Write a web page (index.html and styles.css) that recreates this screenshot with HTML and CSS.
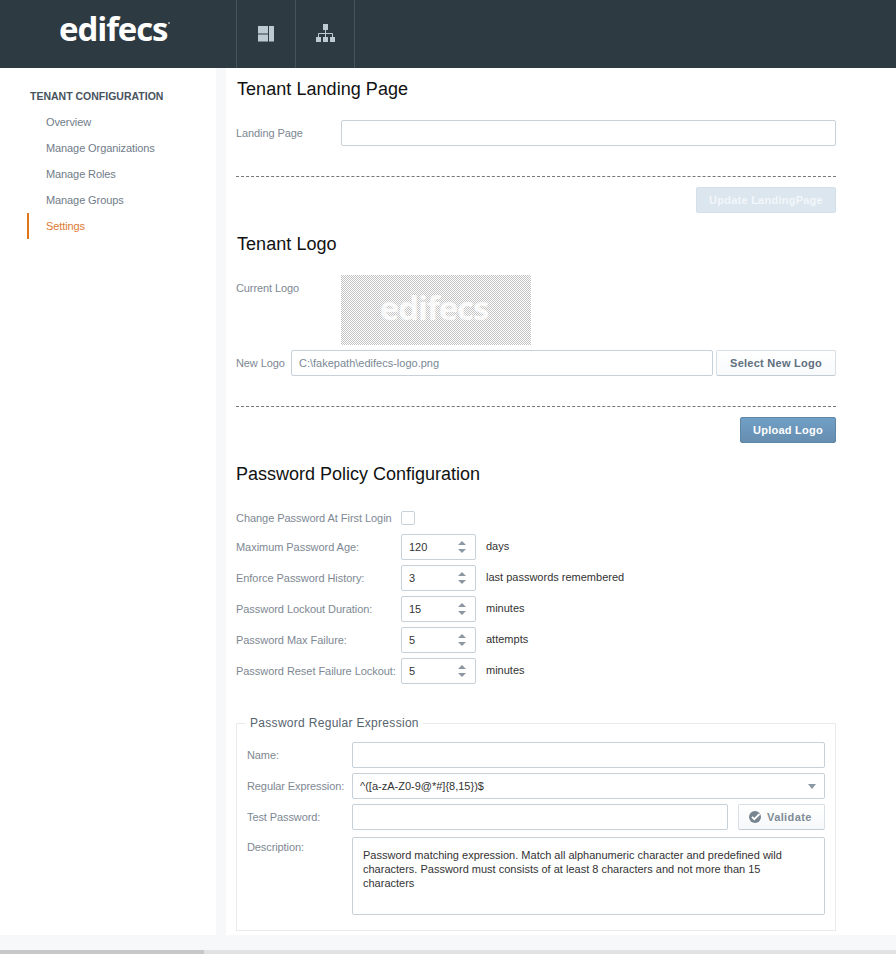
FILE: index.html
```html
<!DOCTYPE html>
<html lang="en">

<head>
 <meta charset="UTF-8">
 <meta name="viewport" content="width=device-width">
 <title>Settings</title>
 <link rel="stylesheet" href="styles.css">
</head>

<body>

 <header class="topbar">
  <div class="brand"><span class="brand-name">edifecs</span><span class="brand-mark"></span></div>
  <a class="topnav" href="#">
   <svg width="16" height="16" viewBox="0 0 16 16">
    <rect x="0" y="0" width="10" height="7.5" fill="#bccad2"/>
    <rect x="0" y="8.5" width="10" height="7" fill="#bccad2"/>
    <rect x="11" y="0" width="5" height="15.5" fill="#bccad2"/>
   </svg>
  </a>
  <a class="topnav last" href="#">
   <svg width="19" height="18" viewBox="0 0 19 18">
    <rect x="7" y="0" width="5" height="6" fill="#bccad2"/>
    <path d="M9.5 6v7M2.5 13V9.5h14V13" fill="none" stroke="#bccad2"/>
    <rect x="0" y="13" width="5" height="5" fill="#bccad2"/>
    <rect x="7" y="13" width="5" height="5" fill="#bccad2"/>
    <rect x="14" y="13" width="5" height="5" fill="#bccad2"/>
   </svg>
  </a>
 </header>

 <div class="layout">

  <nav class="sidebar">
   <h3>Tenant Configuration</h3>
   <a href="#">Overview</a>
   <a href="#">Manage Organizations</a>
   <a href="#">Manage Roles</a>
   <a href="#">Manage Groups</a>
   <a class="active" href="#">Settings</a>
  </nav>

  <main class="content">

   <h2 class="inset">Tenant Landing Page</h2>
   <div class="row landing">
    <label class="lbl-landing">Landing Page</label>
    <input class="field grow">
   </div>
   <hr class="dash">
   <div class="actions"><button class="btn primary disabled" type="button">Update LandingPage</button></div>

   <h2 class="logo-title inset">Tenant Logo</h2>
   <div class="row current-logo">
    <label class="lbl-landing">Current Logo</label>
    <div class="logo-preview"><span>edifecs</span></div>
   </div>
   <div class="row new-logo">
    <label>New Logo</label>
    <input class="field grow path" value="C:\fakepath\edifecs-logo.png">
    <button class="btn select-logo" type="button">Select New Logo</button>
   </div>
   <hr class="dash">
   <div class="actions"><button class="btn primary upload" type="button">Upload Logo</button></div>

   <h2 class="logo-title">Password Policy Configuration</h2>

   <div class="policy">
    <div class="row check-row">
     <label class="lbl-policy">Change Password At First Login</label>
     <input class="check" type="checkbox">
    </div>
    <div class="row">
     <label class="lbl-policy">Maximum Password Age:</label>
     <div class="spinner"><input value="120"><span class="arrows"><i class="up"></i><i class="down"></i></span></div>
     <span class="unit">days</span>
    </div>
    <div class="row">
     <label class="lbl-policy">Enforce Password History:</label>
     <div class="spinner"><input value="3"><span class="arrows"><i class="up"></i><i class="down"></i></span></div>
     <span class="unit">last passwords remembered</span>
    </div>
    <div class="row">
     <label class="lbl-policy">Password Lockout Duration:</label>
     <div class="spinner"><input value="15"><span class="arrows"><i class="up"></i><i class="down"></i></span></div>
     <span class="unit">minutes</span>
    </div>
    <div class="row">
     <label class="lbl-policy">Password Max Failure:</label>
     <div class="spinner"><input value="5"><span class="arrows"><i class="up"></i><i class="down"></i></span></div>
     <span class="unit">attempts</span>
    </div>
    <div class="row">
     <label class="lbl-policy">Password Reset Failure Lockout:</label>
     <div class="spinner"><input value="5"><span class="arrows"><i class="up"></i><i class="down"></i></span></div>
     <span class="unit">minutes</span>
    </div>
   </div>

   <fieldset class="regex">
    <legend>Password Regular Expression</legend>
    <div class="row">
     <label class="lbl-regex">Name:</label>
     <input class="field grow">
    </div>
    <div class="row">
     <label class="lbl-regex">Regular Expression:</label>
     <div class="field grow select">^([a-zA-Z0-9@*#]{8,15})$<i class="caret"></i></div>
    </div>
    <div class="row">
     <label class="lbl-regex">Test Password:</label>
     <input class="field grow">
     <button class="btn validate" type="button">
      <svg width="12" height="12" viewBox="0 0 12 12">
       <circle cx="6" cy="6" r="6" fill="#76858f"/>
       <path d="M3 5.8l2.3 2.4L10.6 3" fill="none" stroke="#fff" stroke-width="1.8"/>
      </svg>
      Validate
     </button>
    </div>
    <div class="row desc-row">
     <label class="lbl-regex">Description:</label>
     <textarea class="field grow desc">Password matching expression. Match all alphanumeric character and predefined wild characters. Password must consists of at least 8 characters and not more than 15 characters</textarea>
    </div>
   </fieldset>

  </main>
 </div>

 <div class="hscroll"><div class="thumb"></div></div>

</body>
</html>
```

FILE: styles.css
```css
html, body {
  margin: 0;
  height: 954px;
  overflow: hidden;
}
body {
  font-family: "Liberation Sans", Arial, sans-serif;
  font-size: 11px;
  background-color: #f7f8fa;
  color: #333;
  position: relative;
}

/* barra superior */
.topbar {
  display: flex;
  height: 68px;
  background-color: #2e3a42;
}
.brand {
  width: 236px;
  box-sizing: border-box;
  padding: 8px 0 0 59px;
  display: flex;
  align-items: flex-start;
}
.brand-name {
  font-family: "Open Sans", sans-serif;
  font-size: 33px;
  line-height: 42px;
  font-weight: 700;
  letter-spacing: -1.1px;
  color: #fff;
}
.brand-mark {
  width: 2px;
  height: 2px;
  margin: 14px 0 0 1px;
  background-color: #8f999f;
}
.topnav {
  width: 59px;
  box-sizing: border-box;
  border-left: 1px solid #46535b;
  display: flex;
  justify-content: center;
  padding-top: 26px;
}
.topnav.last {
  width: 60px;
  border-right: 1px solid #46535b;
  padding-top: 24px;
}

.layout {
  display: flex;
  height: 867px;
}

/* menu lateral */
.sidebar {
  width: 216px;
  box-sizing: border-box;
  background-color: white;
  padding: 21px 0 0 27px;
}
.sidebar h3 {
  margin: 0 0 6px 3px;
  font-size: 10.5px;
  line-height: 14px;
  font-weight: bold;
  text-transform: uppercase;
  color: #47535d;
}
.sidebar a {
  display: block;
  height: 26px;
  line-height: 26px;
  padding-left: 19px;
  color: #707c89;
  text-decoration: none;
  letter-spacing: -0.1px;
}
.sidebar a.active {
  padding-left: 17px;
  border-left: 2px solid #e0761a;
  color: #dc7a33;
}

/* contenido */
.content {
  flex: 1;
  margin-left: 10px;
  background-color: white;
  padding: 9px 60px 0 10px;
}
h2 {
  margin: 0;
  font-size: 18px;
  line-height: 24px;
  font-weight: normal;
  color: #111;
}
.inset {
  padding-left: 1px;
  letter-spacing: 0.05px;
}
.logo-title {
  margin-top: 19px;
}
.row {
  display: flex;
  align-items: center;
}
label {
  color: #7e8893;
  letter-spacing: -0.1px;
}
.landing {
  margin-top: 19px;
}
.lbl-landing {
  width: 105px;
  flex: none;
}
.field {
  height: 26px;
  box-sizing: border-box;
  border: 1px solid #c6d1da;
  border-radius: 2px;
  background-color: white;
  font-family: inherit;
  font-size: 11px;
  color: #333;
  padding: 0 7px;
  outline: none;
}
.grow {
  flex: 1;
  min-width: 0;
}
.dash {
  margin: 30px 0 10px;
  height: 0;
  border: 0;
  border-top: 1px dashed #777;
}
.actions {
  display: flex;
  justify-content: flex-end;
}
.btn {
  height: 26px;
  box-sizing: border-box;
  border-radius: 2px;
  font-family: inherit;
  font-size: 11px;
  font-weight: bold;
  letter-spacing: 0.25px;
  padding: 0;
  cursor: pointer;
}
.primary {
  color: white;
  background: linear-gradient(#719fc5, #668eb0);
  border: 1px solid #5e86a7;
}
.primary.disabled {
  width: 140px;
  color: #f3f7fa;
  background: #dbe6ef;
  border: 1px solid #d5e1ea;
}
.upload {
  width: 96px;
}
.current-logo {
  margin-top: 19px;
  align-items: flex-start;
}
.current-logo label {
  margin-top: 7px;
}
.logo-preview {
  width: 190px;
  height: 70px;
  box-sizing: border-box;
  padding: 0 4px 6px 0;
  background-color: white;
  background-image: url("data:image/svg+xml,%3Csvg xmlns='http://www.w3.org/2000/svg' width='2' height='2' shape-rendering='crispEdges'%3E%3Crect width='1' height='1' fill='%23c4c4c4'/%3E%3Crect x='1' y='1' width='1' height='1' fill='%23c4c4c4'/%3E%3C/svg%3E");
  background-size: 2px 2px;
  display: flex;
  align-items: center;
  justify-content: center;
}
.logo-preview span {
  font-family: "Open Sans", sans-serif;
  font-size: 33px;
  font-weight: 700;
  letter-spacing: -1.1px;
  color: #fff;
  opacity: 0.85;
}
.new-logo {
  margin-top: 5px;
}
.new-logo label {
  width: 55px;
  flex: none;
}
.path {
  color: #7a8896;
}
.select-logo {
  width: 120px;
  margin-left: 3px;
  color: #5f6f7f;
  background: linear-gradient(#fff, #f7f9fb);
  border: 1px solid #d8dfe5;
  border-bottom-color: #c2ccd4;
}

/* politica de contrasenas */
.policy {
  margin-top: 25px;
}
.policy .row {
  height: 26px;
  margin-bottom: 5px;
}
.policy .check-row {
  height: 14px;
  margin: 5px 0 9px;
}
.lbl-policy {
  width: 165px;
  flex: none;
  white-space: nowrap;
  letter-spacing: -0.05px;
}
.check {
  appearance: none;
  width: 14px;
  height: 14px;
  margin: 0;
  box-sizing: border-box;
  border: 1px solid #c6d1da;
  border-radius: 2px;
  background-color: white;
}
.spinner {
  width: 75px;
  height: 26px;
  box-sizing: border-box;
  border: 1px solid #c6d1da;
  border-radius: 2px;
  display: flex;
  align-items: center;
}
.spinner input {
  width: 43px;
  border: 0;
  padding: 0 0 0 7px;
  font-family: inherit;
  font-size: 11px;
  color: #333;
  outline: none;
}
.arrows {
  display: flex;
  flex-direction: column;
  gap: 4px;
  margin-left: 6px;
}
.arrows i {
  display: block;
  width: 0;
  height: 0;
  border-left: 4px solid transparent;
  border-right: 4px solid transparent;
}
.arrows .up {
  border-bottom: 4px solid #8b98a3;
}
.arrows .down {
  border-top: 4px solid #8b98a3;
}
.unit {
  margin: -2px 0 0 10px;
  color: #333;
}

/* expresion regular */
.regex {
  margin: 32px 0 0;
  padding: 12px 10px 15px;
  height: 215px;
  box-sizing: border-box;
  border: 1px solid #e8eaec;
}
.regex legend {
  padding: 0 4px;
  margin-left: -1px;
  font-size: 12px;
  line-height: 14px;
  letter-spacing: 0.3px;
  color: #56636e;
}
.regex .row {
  margin-bottom: 5px;
}
.lbl-regex {
  width: 105px;
  flex: none;
}
.select {
  position: relative;
  display: flex;
  align-items: center;
}
.caret {
  position: absolute;
  right: 8px;
  top: 10px;
  width: 0;
  height: 0;
  border-left: 4px solid transparent;
  border-right: 4px solid transparent;
  border-top: 5px solid #8b98a3;
}
.validate {
  width: 87px;
  margin-left: 10px;
  color: #7f8c96;
  background: linear-gradient(#fff, #f6f8fa);
  border: 1px solid #d8dfe5;
  border-bottom-color: #c2ccd4;
  display: flex;
  align-items: center;
  justify-content: flex-start;
  gap: 6px;
  padding-left: 10px;
  letter-spacing: 0.4px;
}
.regex .desc-row {
  align-items: flex-start;
  margin-top: 7px;
}
.desc-row label {
  margin-top: 4px;
}
.desc {
  height: 78px;
  padding: 10px 10px;
  line-height: 14px;
  resize: none;
}

/* barra de desplazamiento */
.hscroll {
  position: absolute;
  left: 0;
  right: 0;
  bottom: 0;
  height: 4px;
  background-color: #e2e2e2;
}
.thumb {
  width: 204px;
  height: 4px;
  background-color: #c8c8c8;
}
```
